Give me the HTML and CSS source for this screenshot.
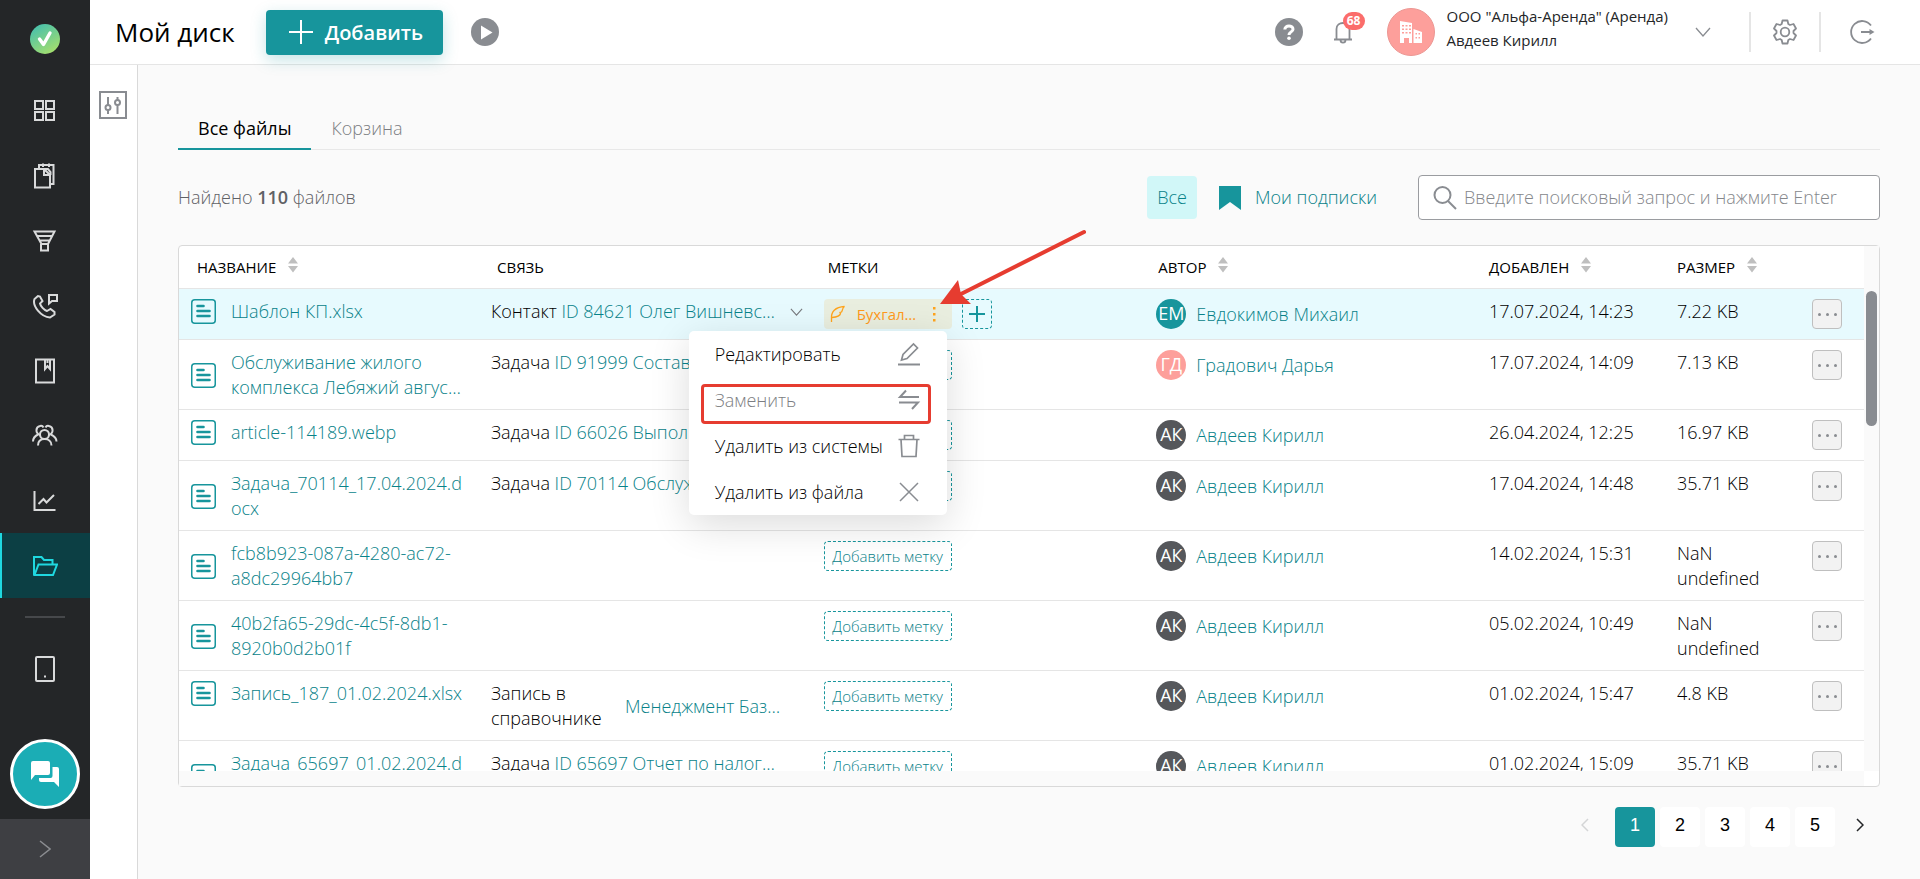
FILE: index.html
```html
<!DOCTYPE html>
<html lang="ru">
<head>
  <meta charset="UTF-8" />
  <title>Мой диск</title>
  <link rel="stylesheet" href="styles.css">
</head>
<body>
  <!-- Icons -->
  <svg class="sprite" width="0" height="0">
    <symbol id="i-file" viewBox="0 0 25 25">
      <rect x="0.75" y="0.75" width="23.5" height="23.5" rx="3" fill="none" stroke="currentColor" stroke-width="1.5"/>
      <path d="M6.500 7H12.500M6.500 12H18.500M6.500 17H18.500" fill="none" stroke="currentColor" stroke-width="2.600" stroke-linecap="round"/>
    </symbol>
    <symbol id="i-sort" viewBox="0 0 10 16">
      <path d="M5 0L10 6.5H0ZM5 15.500L0 9H10Z" fill="#bfbfbf"/>
    </symbol>
    <symbol id="i-down" viewBox="0 0 16 10">
      <path d="M1 1L8 9L15 1" fill="none" stroke="currentColor" stroke-width="1.3"/>
    </symbol>
  </svg>

  <div class="layout">
    <nav class="sidebar">
      <a class="logo" href="#" aria-label="Главная">
        <svg width="30" height="30" viewBox="0 0 30 30">
          <defs>
            <linearGradient id="logoFill" x1="0.2" y1="0" x2="0.8" y2="1">
              <stop offset="0" stop-color="#45bfae"/>
              <stop offset="1" stop-color="#a9e06a"/>
            </linearGradient>
          </defs>
          <circle cx="15" cy="15" r="15" fill="url(#logoFill)"/>
          <path d="M9.500 15L13.500 20.500L20 9" fill="none" stroke="#fff" stroke-width="3.4" stroke-linecap="round" stroke-linejoin="round"/>
        </svg>
      </a>
      <a class="nav-item" href="#" aria-label="Рабочий стол">
        <svg width="26" height="26" viewBox="0 0 26 26"><path d="M3 3H11V11H3ZM14 3H22V11H14ZM3 14H11V22H3ZM14 14H22V22H14Z"/></svg>
      </a>
      <a class="nav-item" href="#" aria-label="Документы">
        <svg width="26" height="26" viewBox="0 0 26 26"><path d="M3 6H12L18 12V24.500H3ZM12 6V12H18M7 6V2H21.500V21H18M11 0.500V4M17 0.500V4M12 6L16 6L18.500 9V12"/></svg>
      </a>
      <a class="nav-item" href="#" aria-label="Воронка">
        <svg width="26" height="26" viewBox="0 0 26 26"><path d="M2.500 3.500H22.500L16 16H9.500ZM5 8H20.500M8 12.500H17.500M9 16V22.500H16V16"/></svg>
      </a>
      <a class="nav-item" href="#" aria-label="Звонки">
        <svg width="26" height="26" viewBox="0 0 26 26"><path d="M6 3L2.500 6C0 13 9 24 18 24.500L22.500 21.500V19L18.500 16L15 18C12 17 8.500 13 8 10.500L10.500 8L8 3.500ZM17 2H25V8H20L17 10.500Z"/></svg>
      </a>
      <a class="nav-item" href="#" aria-label="Справочники">
        <svg width="26" height="26" viewBox="0 0 26 26"><path d="M4 1.500H22V24.500H4ZM13 1.500V11L15.500 8L18 11V1.500M15.500 1.500V5"/></svg>
      </a>
      <a class="nav-item" href="#" aria-label="Сотрудники">
        <svg width="26" height="26" viewBox="0 0 26 26"><circle cx="12.500" cy="11.500" r="4.500"/><path d="M6 22.500C6 18 9 16 12.500 16S19.500 18 19.500 22.500M8 12C3 10 3.500 4 8 3C9.500 2.500 11 3.500 11.500 4.500M6 11.500C3 13 1 15 1 18.500M17 12C22 10 21.500 4 17 3C15.500 2.500 14 3.500 13.500 4.500M19 11.500C22 13 24.500 15 24.500 18.500"/></svg>
      </a>
      <a class="nav-item" href="#" aria-label="Отчёты">
        <svg width="26" height="26" viewBox="0 0 26 26"><path d="M2.500 3V22H23.500M6.500 16L11.500 11L14.500 14.500L22 7"/></svg>
      </a>
      <a class="nav-item active" href="#" aria-label="Мой диск">
        <svg width="26" height="26" viewBox="0 0 26 26"><path d="M2 22V4H9.500L12 7H20.500V11M2.500 22L6.500 11.500H25L21 22Z"/></svg>
      </a>
      <div class="nav-divider"></div>
      <a class="nav-item" href="#" aria-label="Приложение">
        <svg width="26" height="26" viewBox="0 0 26 26"><rect x="4" y="1" width="18" height="24" rx="1"/><path d="M12 20.500H14"/></svg>
      </a>
      <button class="chat" aria-label="Чат">
        <svg width="30" height="28" viewBox="0 0 30 28"><path d="M3 1H18Q20 1 20 3V13Q20 15 18 15H5L1 20V3Q1 1 3 1Z"/><path d="M22.500 7H27Q29 7 29 9V27L24 22H11Q9 22 9 20V18H20.500Q22.500 18 22.500 16Z"/></svg>
      </button>
      <button class="expand" aria-label="Развернуть меню">
        <svg width="12" height="18" viewBox="0 0 12 18"><path d="M1 1L11 9L1 17" fill="none" stroke="#8b8d91" stroke-width="1.5"/></svg>
      </button>
    </nav>

    <div class="page">
      <header class="topbar">
        <h1>Мой диск</h1>
        <button class="add-btn">
          <svg width="24" height="24" viewBox="0 0 24 24"><path d="M12 0V24M0 12H24" stroke="#fff" stroke-width="2"/></svg>
          Добавить
        </button>
        <button class="icon-btn play" aria-label="Видео">
          <svg width="28" height="28" viewBox="0 0 28 28"><circle cx="14" cy="14" r="14" fill="#898c91"/><path d="M10 7.500L21.500 14.500L10 21.500Z" fill="#fff"/></svg>
        </button>

        <div class="account">
          <button class="icon-btn" aria-label="Помощь">
            <svg width="28" height="28" viewBox="0 0 28 28"><circle cx="14" cy="14" r="14" fill="#898c91"/><path d="M9.800 11.500C9.800 6.800 18 6.800 18 11.200C18 14 14 13.800 14 17" fill="none" stroke="#fff" stroke-width="3"/><circle cx="14" cy="20.300" r="1.800" fill="#fff"/></svg>
          </button>
          <button class="icon-btn bell" aria-label="Уведомления">
            <svg width="20" height="24" viewBox="0 0 20 24" fill="none" stroke="#898c91" stroke-width="1.800"><path d="M1 19.500H19M3.500 19.500V9C3.500 1 16.500 1 16.500 9V19.500M7.500 20C7.500 23.500 12.500 23.500 12.500 20"/></svg>
            <span class="badge">68</span>
          </button>
          <div class="company">
            <svg width="24" height="24" viewBox="0 0 24 24"><path fill="#fff" fill-rule="evenodd" d="M1 1L13 3V23H10V18H5V23H1ZM3 5V6.500H5V5ZM6.500 5V6.500H8.500V5ZM10 5V6.500H12V5ZM3 8.500V10H5V8.500ZM6.500 8.500V10H8.500V8.500ZM10 8.500V10H12V8.500ZM3 12V13.500H5V12ZM6.500 12V13.500H8.500V12ZM10 12V13.500H12V12ZM14.500 9L23 12V23H14.500ZM16.500 13V14.500H18V13ZM19.500 13V14.500H21V13ZM16.500 17V18.500H18V17ZM19.500 17V18.500H21V17Z"/></svg>
          </div>
          <div class="who">
            <div>ООО "Альфа-Аренда" (Аренда)</div>
            <div>Авдеев Кирилл</div>
          </div>
          <button class="icon-btn more" aria-label="Сменить аккаунт"><svg width="16" height="10"><use href="#i-down"/></svg></button>
          <button class="icon-btn boxed" aria-label="Настройки">
            <svg width="26" height="26" viewBox="0 0 26 26" fill="none" stroke="#898c91" stroke-width="1.800" stroke-linejoin="round"><circle cx="13" cy="13" r="4.300"/><path d="M10.500 1.500H15.500L16.300 5L18 6L21.500 5L24 9.500L21.500 12V14L24 16.500L21.500 21L18 20L16.300 21L15.500 24.500H10.500L9.700 21L8 20L4.500 21L2 16.500L4.500 14V12L2 9.500L4.500 5L8 6L9.700 5Z"/></svg>
          </button>
          <button class="icon-btn" aria-label="Выйти">
            <svg width="26" height="26" viewBox="0 0 26 26"><path d="M22 6.500A11 11 0 1 0 22 19.500M12 13H21" fill="none" stroke="#898c91" stroke-width="1.800"/><path d="M20.500 10L25.500 13L20.500 16Z" fill="#898c91"/></svg>
          </button>
        </div>
      </header>

      <div class="body">
        <aside class="filters">
          <button class="icon-btn" aria-label="Фильтры">
            <svg width="28" height="28" viewBox="0 0 28 28" fill="none" stroke="#898c91" stroke-width="2"><rect x="1" y="1" width="26" height="26"/><path d="M9 6V14M9 19V23M18.500 6V9M18.500 14V23"/><circle cx="9" cy="16.500" r="2.500"/><circle cx="18.500" cy="11.500" r="2.500"/></svg>
          </button>
        </aside>

        <main class="content">
          <div class="tabs">
            <a class="tab active" href="#">Все файлы</a>
            <a class="tab" href="#">Корзина</a>
          </div>

          <div class="toolbar">
            <div class="found">Найдено <b>110</b> файлов</div>
            <button class="all-btn">Все</button>
            <a class="subs" href="#">
              <svg width="22" height="24" viewBox="0 0 22 24"><path d="M0 0H22V24L11 16L0 24Z" fill="#17959c"/></svg>
              Мои подписки
            </a>
            <label class="search">
              <svg width="24" height="24" viewBox="0 0 24 24" fill="none" stroke="#898c91" stroke-width="2"><circle cx="9.500" cy="9" r="8"/><path d="M15 15L23 23"/></svg>
              <input type="text" aria-label="Поиск" placeholder="Введите поисковый запрос и нажмите Enter" />
            </label>
          </div>

          <div class="files">
            <div class="files-main">
              <table class="files-head">
                <thead>
                  <tr>
                    <th class="c-name">НАЗВАНИЕ <svg class="sort"><use href="#i-sort"/></svg></th>
                    <th>СВЯЗЬ</th>
                    <th>МЕТКИ</th>
                    <th>АВТОР <svg class="sort"><use href="#i-sort"/></svg></th>
                    <th class="c-date">ДОБАВЛЕН <svg class="sort"><use href="#i-sort"/></svg></th>
                    <th class="c-size">РАЗМЕР <svg class="sort"><use href="#i-sort"/></svg></th>
                    <th class="c-act"></th>
                  </tr>
                </thead>
              </table>
              <div class="files-scroll">
                <table class="files-body">
                  <tbody>
                    <tr class="selected">
                      <td class="c-name"><div class="name"><svg><use href="#i-file"/></svg><a href="#">Шаблон КП.xlsx</a></div></td>
                      <td><div class="rel"><span>Контакт <a href="#">ID 84621 Олег Вишневс…</a></span><svg width="13" height="8"><use href="#i-down"/></svg></div></td>
                      <td>
                        <div class="tags">
                          <div class="tag">
                            <svg width="16" height="18" viewBox="0 0 16 18" fill="none" stroke="#ffa41c" stroke-width="1.300"><path d="M1.500 17V13.500C1 7 5 2 14.500 1.500C12 3 13 5 11.500 7L10 7.500L10.500 8.500C10 11 7 12 2 12.500"/></svg>
                            <span>Бухгал…</span>
                            <button class="tag-menu-btn" aria-label="Действия с меткой"><svg width="4" height="16" viewBox="0 0 4 16"><path d="M1 1H3.500V3.500H1ZM1 7H3.500V9.500H1ZM1 13H3.500V15.500H1Z" fill="#ffa41c"/></svg></button>
                          </div>
                          <button class="tag-plus" aria-label="Добавить метку"><svg width="16" height="16" viewBox="0 0 16 16"><path d="M8 0V16M0 8H16" stroke="#17959c" stroke-width="2"/></svg></button>
                          <div class="menu">
                            <button>Редактировать <svg width="24" height="24" viewBox="0 0 24 24"><path d="M1 22.500H23"/><path d="M4.500 18L6 12.500L16.500 2L20.500 6L10 16.500Z" stroke-width="1.700"/></svg></button>
                            <button class="muted">Заменить <svg width="24" height="24" viewBox="0 0 24 24"><path d="M22 9H3L9 2.500M2 14.500H21L15 21"/></svg></button>
                            <button>Удалить из системы <svg width="24" height="24" viewBox="0 0 24 24"><path d="M1.500 5.500H22.500M7.500 5V1.500H16.500V5M4 5.500L5 22.500H19L20 5.500" stroke-width="1.700"/></svg></button>
                            <button>Удалить из файла <svg width="24" height="24" viewBox="0 0 24 24"><path d="M3 3L21 21M21 3L3 21" stroke-width="1.500"/></svg></button>
                            <div class="highlight"></div>
                          </div>
                        </div>
                      </td>
                      <td><div class="author"><span class="ava teal">ЕМ</span><a href="#">Евдокимов Михаил</a></div></td>
                      <td class="c-date">17.07.2024, 14:23</td>
                      <td class="c-size">7.22 KB</td>
                      <td class="c-act"><button class="dots" aria-label="Действия"><i></i><i></i><i></i></button></td>
                    </tr>
                    <tr>
                      <td><div class="name"><svg><use href="#i-file"/></svg><a href="#">Обслуживание жилого комплекса Лебяжий авгус…</a></div></td>
                      <td><div class="rel"><span>Задача <a href="#">ID 91999 Состав…</a></span></div></td>
                      <td><div class="tags"><button class="tag-add">Добавить метку</button></div></td>
                      <td><div class="author"><span class="ava pink">ГД</span><a href="#">Градович Дарья</a></div></td>
                      <td>17.07.2024, 14:09</td>
                      <td>7.13 KB</td>
                      <td><button class="dots" aria-label="Действия"><i></i><i></i><i></i></button></td>
                    </tr>
                    <tr>
                      <td><div class="name"><svg><use href="#i-file"/></svg><a href="#">article-114189.webp</a></div></td>
                      <td><div class="rel"><span>Задача <a href="#">ID 66026 Выпол…</a></span></div></td>
                      <td><div class="tags"><button class="tag-add">Добавить метку</button></div></td>
                      <td><div class="author"><span class="ava">АК</span><a href="#">Авдеев Кирилл</a></div></td>
                      <td>26.04.2024, 12:25</td>
                      <td>16.97 KB</td>
                      <td><button class="dots" aria-label="Действия"><i></i><i></i><i></i></button></td>
                    </tr>
                    <tr>
                      <td><div class="name"><svg><use href="#i-file"/></svg><a href="#">Задача_70114_17.04.2024.docx</a></div></td>
                      <td><div class="rel"><span>Задача <a href="#">ID 70114 Обслуж…</a></span></div></td>
                      <td><div class="tags"><button class="tag-add">Добавить метку</button></div></td>
                      <td><div class="author"><span class="ava">АК</span><a href="#">Авдеев Кирилл</a></div></td>
                      <td>17.04.2024, 14:48</td>
                      <td>35.71 KB</td>
                      <td><button class="dots" aria-label="Действия"><i></i><i></i><i></i></button></td>
                    </tr>
                    <tr>
                      <td><div class="name"><svg><use href="#i-file"/></svg><a href="#">fcb8b923-087a-4280-ac72-a8dc29964bb7</a></div></td>
                      <td></td>
                      <td><div class="tags"><button class="tag-add">Добавить метку</button></div></td>
                      <td><div class="author"><span class="ava">АК</span><a href="#">Авдеев Кирилл</a></div></td>
                      <td>14.02.2024, 15:31</td>
                      <td>NaN undefined</td>
                      <td><button class="dots" aria-label="Действия"><i></i><i></i><i></i></button></td>
                    </tr>
                    <tr>
                      <td><div class="name"><svg><use href="#i-file"/></svg><a href="#">40b2fa65-29dc-4c5f-8db1-8920b0d2b01f</a></div></td>
                      <td></td>
                      <td><div class="tags"><button class="tag-add">Добавить метку</button></div></td>
                      <td><div class="author"><span class="ava">АК</span><a href="#">Авдеев Кирилл</a></div></td>
                      <td>05.02.2024, 10:49</td>
                      <td>NaN undefined</td>
                      <td><button class="dots" aria-label="Действия"><i></i><i></i><i></i></button></td>
                    </tr>
                    <tr>
                      <td><div class="name"><svg><use href="#i-file"/></svg><a href="#">Запись_187_01.02.2024.xlsx</a></div></td>
                      <td><div class="rel record"><span>Запись в справочнике</span><a href="#">Менеджмент Баз…</a></div></td>
                      <td><div class="tags"><button class="tag-add">Добавить метку</button></div></td>
                      <td><div class="author"><span class="ava">АК</span><a href="#">Авдеев Кирилл</a></div></td>
                      <td>01.02.2024, 15:47</td>
                      <td>4.8 KB</td>
                      <td><button class="dots" aria-label="Действия"><i></i><i></i><i></i></button></td>
                    </tr>
                    <tr>
                      <td><div class="name"><svg><use href="#i-file"/></svg><a href="#">Задача_65697_01.02.2024.docx</a></div></td>
                      <td><div class="rel"><span>Задача <a href="#">ID 65697 Отчет по налог…</a></span></div></td>
                      <td><div class="tags"><button class="tag-add">Добавить метку</button></div></td>
                      <td><div class="author"><span class="ava">АК</span><a href="#">Авдеев Кирилл</a></div></td>
                      <td>01.02.2024, 15:09</td>
                      <td>35.71 KB</td>
                      <td><button class="dots" aria-label="Действия"><i></i><i></i><i></i></button></td>
                    </tr>
                  </tbody>
                </table>
              </div>
            </div>
            <div class="track-y"><div class="thumb"></div></div>
            <div class="track-x"></div>
            <div class="corner"></div>
            <svg class="arrow" width="150" height="80" viewBox="0 0 150 80"><path d="M20 66L145 3" stroke="#e63c30" stroke-width="4" stroke-linecap="round"/><path d="M1 75L19 51L22 65L32 75Z" fill="#e63c30"/></svg>
          </div>

          <div class="pager">
            <button class="prev" aria-label="Назад" disabled><svg width="8" height="14" viewBox="0 0 8 14"><path d="M7 1L1 7L7 13"/></svg></button>
            <button class="current">1</button>
            <button>2</button>
            <button>3</button>
            <button>4</button>
            <button>5</button>
            <button class="next" aria-label="Вперёд"><svg width="8" height="14" viewBox="0 0 8 14"><path d="M1 1L7 7L1 13"/></svg></button>
          </div>
        </main>
      </div>
    </div>
  </div>
</body>
</html>
```
FILE: styles.css
```css
* {
  box-sizing: border-box;
}

body {
  margin: 0;
  font-family: "Open Sans", sans-serif;
  font-size: 18px;
  font-weight: 300;
  line-height: 25px;
  color: #000;
  background: #fafafa;
}

a {
  color: #088289;
  text-decoration: none;
}

button {
  padding: 0;
  border: none;
  background: none;
  font: inherit;
  color: inherit;
  cursor: pointer;
}

svg {
  display: block;
  flex-shrink: 0;
}

.sprite {
  position: absolute;
}

.layout {
  display: flex;
  height: 100vh;
  overflow: hidden;
}

/* Sidebar */
.sidebar {
  width: 90px;
  flex-shrink: 0;
  display: flex;
  flex-direction: column;
  align-items: center;
  background: #242628;
}

.logo {
  padding: 24px 0;
}

.nav-item {
  width: 100%;
  height: 65px;
  display: flex;
  align-items: center;
  justify-content: center;
}

.nav-item svg {
  fill: none;
  stroke: #d9dadb;
  stroke-width: 2;
}

.nav-item.active {
  background: #0c3f44;
  box-shadow: inset 2px 0 0 #1fd8e0;
}

.nav-item.active svg {
  stroke: #1fd8e0;
}

.nav-divider {
  width: 40px;
  height: 2px;
  margin: 18px 0;
  background: #46484b;
}

.chat {
  width: 70px;
  height: 70px;
  margin-top: auto;
  margin-bottom: 10px;
  display: flex;
  align-items: center;
  justify-content: center;
  border: 3px solid #fff;
  border-radius: 50%;
  background: #1badb5;
}

.chat svg {
  fill: #fff;
}

.expand {
  width: 100%;
  height: 60px;
  display: flex;
  align-items: center;
  justify-content: center;
  background: #3e3f43;
}

/* Top bar */
.page {
  flex: 1;
  min-width: 0;
  display: flex;
  flex-direction: column;
}

.topbar {
  height: 65px;
  flex-shrink: 0;
  display: flex;
  align-items: center;
  padding: 0 45px 0 25px;
  background: #fff;
  border-bottom: 1px solid #e5e5e5;
}

h1 {
  margin: 0 31px 0 0;
  font-size: 26px;
  font-weight: 500;
}

.add-btn {
  height: 45px;
  display: flex;
  align-items: center;
  gap: 12px;
  padding: 0 20px 0 23px;
  border-radius: 4px;
  background: #17959c;
  color: #fff;
  font-size: 20px;
  font-weight: 600;
  box-shadow: 0 5px 15px rgba(23, 149, 156, 0.25);
}

.play {
  margin-left: 28px;
}

.account {
  margin-left: auto;
  display: flex;
  align-items: center;
}

.bell {
  position: relative;
  margin: 0 34px 0 30px;
}

.badge {
  position: absolute;
  top: -8px;
  left: 10px;
  width: 22px;
  height: 18px;
  border-radius: 9px;
  background: #fb6d6b;
  color: #fff;
  font-size: 12px;
  font-weight: 700;
  line-height: 18px;
}

.company {
  width: 48px;
  height: 48px;
  display: flex;
  align-items: center;
  justify-content: center;
  border: 1px solid #ec9793;
  border-radius: 50%;
  background: #fd9f9b;
}

.who {
  margin-left: 12px;
  padding-bottom: 8px;
  font-size: 15px;
  font-weight: 400;
  line-height: 24px;
  color: #242628;
}

.more {
  margin: 0 38px 0 27px;
  color: #898c91;
}

.boxed {
  height: 40px;
  margin-right: 28px;
  padding: 0 21px;
  border: solid #e5e5e5;
  border-width: 0 2px;
}

/* Content */
.body {
  flex: 1;
  min-height: 0;
  display: flex;
}

.filters {
  width: 48px;
  flex-shrink: 0;
  padding: 26px 9px;
  background: #fff;
  border-right: 1px solid #d9d9d9;
}

.content {
  flex: 1;
  min-width: 0;
  padding: 41px 40px 0;
}

.tabs {
  display: flex;
  border-bottom: 1px solid #e8e8e8;
}

.tab {
  height: 44px;
  margin-bottom: -1px;
  padding: 10px 20px;
  color: #7c7e82;
}

.tab.active {
  color: #000;
  font-weight: 500;
  border-bottom: 2px solid #17959c;
}

.toolbar {
  display: flex;
  align-items: center;
  margin: 25px 0;
}

.found {
  margin-right: auto;
  color: #5f6165;
}

.found b {
  font-weight: 600;
}

.all-btn {
  height: 43px;
  padding: 0 10px;
  border-radius: 4px;
  background: #d1f7f8;
  color: #088289;
}

.subs {
  display: flex;
  align-items: center;
  gap: 14px;
  margin: 0 41px 0 22px;
}

.search {
  width: 462px;
  height: 45px;
  display: flex;
  align-items: center;
  gap: 7px;
  padding: 0 14px;
  border: 1px solid #9a9ca0;
  border-radius: 4px;
  background: #fff;
}

.search input {
  flex: 1;
  min-width: 0;
  padding: 0;
  border: none;
  outline: none;
  background: none;
  font: inherit;
}

.search input::placeholder {
  color: #85878b;
  opacity: 1;
}

/* Files table */
.files {
  position: relative;
  display: grid;
  grid-template-columns: 1fr 15px;
  grid-template-rows: auto 15px;
  border: 1px solid #d9d9d9;
  border-radius: 4px;
  background: #fff;
}

.files-main {
  min-width: 0;
}

table {
  width: 100%;
  table-layout: fixed;
  border-collapse: separate;
  border-spacing: 0;
}

th {
  height: 43px;
  padding: 0 0 0 18px;
  border-bottom: 1px solid #e5e5e5;
  font-size: 15px;
  font-weight: 500;
  text-align: left;
}

.sort {
  display: inline-block;
  width: 10px;
  height: 16px;
  margin-left: 8px;
}

.files-head .c-name {
  width: 300px;
}

.files-head .c-act {
  width: 70px;
}

.files-body .c-name {
  width: 302px;
}

.files-body .c-act {
  width: 62px;
}

.c-date {
  width: 188px;
}

.c-size {
  width: 135px;
}

.files-scroll {
  height: calc(100vh - 397px);
  overflow: hidden;
}

td {
  padding: 10px 10px 9px;
  border-bottom: 1px solid #e5e5e5;
  vertical-align: top;
}

.selected td {
  background: #e7fafe;
}

.name {
  display: flex;
  align-items: center;
  gap: 15px;
  padding-left: 2px;
  color: #17959c;
}

.name svg {
  width: 25px;
  height: 25px;
}

.name a {
  max-width: 240px;
  overflow-wrap: anywhere;
}

.rel {
  display: flex;
  align-items: center;
  gap: 15px;
  white-space: nowrap;
}

.rel svg {
  color: #76787c;
}

.rel.record {
  white-space: normal;
}

.rel.record span {
  width: 119px;
}

.tags {
  position: relative;
  height: 31px;
  display: flex;
  align-items: flex-start;
  gap: 10px;
}

.tag,
.tag-add,
.tag-plus {
  height: 30px;
  border-radius: 4px;
  font-size: 15px;
}

.tag {
  width: 128px;
  display: flex;
  align-items: center;
  padding: 0 16px 0 6px;
  background: #e9eedf;
  color: #ff9a1c;
  font-weight: 400;
}

.tag span {
  margin: 0 auto 0 11px;
}

.tag-add {
  width: 128px;
  border: 1px dashed #17959c;
  color: #088289;
}

.tag-plus {
  width: 30px;
  display: flex;
  align-items: center;
  justify-content: center;
  border: 1px dashed #17959c;
}

.menu {
  position: absolute;
  z-index: 5;
  top: 32px;
  left: -135px;
  width: 258px;
  border-radius: 5px;
  background: #fff;
  box-shadow: 0 10px 40px rgba(0, 0, 0, 0.14);
}

.menu button {
  width: 100%;
  height: 46px;
  display: flex;
  align-items: center;
  justify-content: space-between;
  padding: 0 26px;
  white-space: nowrap;
}

.menu svg {
  fill: none;
  stroke: #898c91;
  stroke-width: 2;
}

.menu .muted {
  color: #7c7e82;
}

.highlight {
  position: absolute;
  top: 53px;
  left: 12px;
  width: 230px;
  height: 40px;
  border: 3px solid #e63c30;
  border-radius: 4px;
}

.author {
  display: flex;
  align-items: center;
  gap: 10px;
}

.ava {
  width: 30px;
  height: 30px;
  border-radius: 50%;
  background: #55575b;
  color: #fff;
  font-weight: 400;
  line-height: 29px;
  text-align: center;
}

.ava.teal {
  background: #17959c;
}

.ava.pink {
  background: #fd9f9b;
}

.dots {
  width: 30px;
  height: 30px;
  display: flex;
  align-items: center;
  justify-content: center;
  gap: 5px;
  border: 1px solid #bfbfbf;
  border-radius: 4px;
  background: #f2f2f2;
}

.dots i {
  width: 3px;
  height: 3px;
  border-radius: 50%;
  background: #898c91;
}

.track-y,
.track-x {
  background: #fafafa;
}

.track-y {
  padding: 45px 2px 0;
}

.thumb {
  height: 135px;
  border-radius: 6px;
  background: #898c91;
}

.arrow {
  position: absolute;
  z-index: 6;
  top: -17px;
  left: 760px;
  fill: none;
}

/* Pagination */
.pager {
  display: flex;
  justify-content: flex-end;
  gap: 5px;
  margin-top: 20px;
  font-family: "Liberation Sans", sans-serif;
}

.pager button {
  width: 40px;
  height: 40px;
  padding-bottom: 4px;
  border-radius: 4px;
  background: #fff;
}

.pager .current {
  background: #17959c;
  color: #fff;
}

.pager .prev,
.pager .next {
  display: flex;
  align-items: center;
  justify-content: center;
  background: none;
}

.pager .prev {
  margin-right: 5px;
}

.pager svg {
  fill: none;
  stroke: #242628;
  stroke-width: 1.5;
}

.pager .prev svg {
  stroke: #d4d5d6;
}
```
